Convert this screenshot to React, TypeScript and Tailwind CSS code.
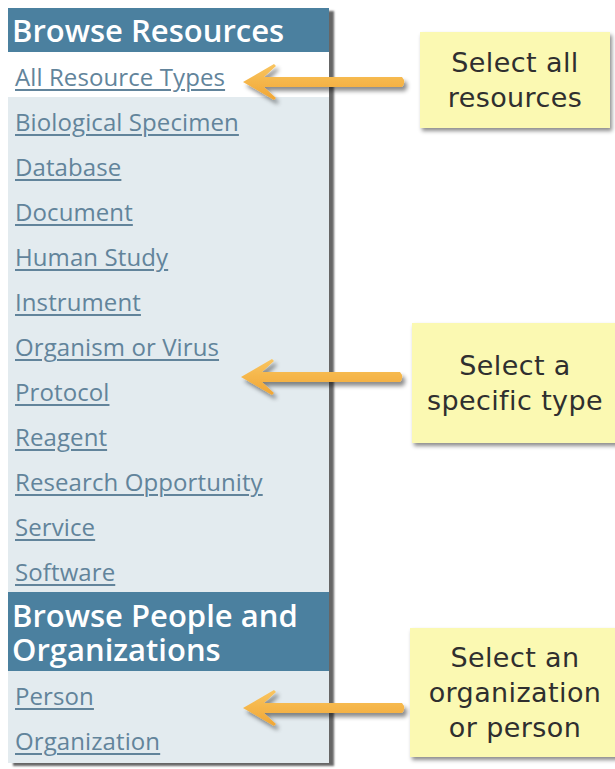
import React from 'react';

const resourceTypes = [
  'All Resource Types',
  'Biological Specimen',
  'Database',
  'Document',
  'Human Study',
  'Instrument',
  'Organism or Virus',
  'Protocol',
  'Reagent',
  'Research Opportunity',
  'Service',
  'Software',
];

const peopleTypes = ['Person', 'Organization'];

function NavLink({ label, active }: { label: string; active?: boolean }) {
  return (
    <div className={`h-[45px] flex items-center px-[7px] pt-[5px] ${active ? 'bg-white' : ''}`}>
      <a href="#" className="text-[24px] tracking-[0.1px] text-[#62849b] underline underline-offset-[3px] decoration-[1.5px] leading-none">
        {label}
      </a>
    </div>
  );
}

function Arrow({ top, left }: { top: number; left: number }) {
  return (
    <svg
      className="absolute"
      style={{ top, left }}
      width="178"
      height="48"
      viewBox="0 0 178 48"
    >
      <defs>
        <filter id={`sh-${top}`} x="-10%" y="-30%" width="130%" height="180%">
          <feDropShadow dx="3" dy="4" stdDeviation="2" floodColor="#000" floodOpacity="0.45" />
        </filter>
        <linearGradient id={`gr-${top}`} x1="0" y1="0" x2="0" y2="1">
          <stop offset="0" stopColor="#f9c560" />
          <stop offset="1" stopColor="#f1a634" />
        </linearGradient>
      </defs>
      <path
        d="M2 20 L33 2 L35 4 L23 15 L161 15 Q165.5 20 161 25 L23 25 L35 36 L33 38 Z"
        fill={`url(#gr-${top})`}
        filter={`url(#sh-${top})`}
      />
    </svg>
  );
}

function Callout({ top, left, width, height, lines }: { top: number; left: number; width: number; height: number; lines: string[] }) {
  return (
    <div
      className="absolute bg-[#fbf9b2] shadow-[2px_3px_4px_rgba(0,0,0,0.45)] flex flex-col items-center justify-center text-[27px] tracking-[0.4px] leading-[35px] text-[#2f2f2f]"
      style={{ top, left, width, height, fontFamily: '"DejaVu Sans", Verdana, sans-serif' }}
    >
      {lines.map((l) => (
        <span key={l}>{l}</span>
      ))}
    </div>
  );
}

export default function App() {
  return (
    <div className="relative w-[615px] h-[769px] bg-white overflow-hidden" style={{ fontFamily: '"Open Sans", sans-serif' }}>
      <div className="pt-2 pl-2">
        <div className="w-[321px] bg-[#e3ebef] shadow-[5px_3px_2px_rgba(0,0,0,0.6)] pb-[2px]">
          <div className="h-[44px] bg-[#4b809f] px-1 flex items-center text-[31px] font-semibold text-white leading-none">
            Browse Resources
          </div>
          {resourceTypes.map((t, i) => (
            <NavLink key={t} label={t} active={i === 0} />
          ))}
          <div className="h-[79px] bg-[#4b809f] px-1 py-[6px] text-[31px] leading-[34px] font-semibold text-white">
            Browse People and Organizations
          </div>
          {peopleTypes.map((t) => (
            <NavLink key={t} label={t} />
          ))}
        </div>
      </div>

      <Arrow top={62} left={241} />
      <Arrow top={357} left={239} />
      <Arrow top={688} left={241} />

      <Callout top={32} left={420} width={190} height={96} lines={['Select all', 'resources']} />
      <Callout top={323} left={412} width={206} height={120} lines={['Select a', 'specific type']} />
      <Callout top={628} left={410} width={210} height={129} lines={['Select an', 'organization', 'or person']} />
    </div>
  );
}
